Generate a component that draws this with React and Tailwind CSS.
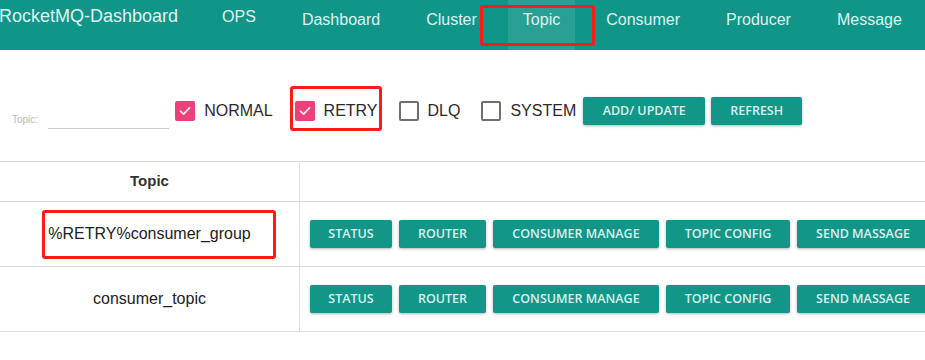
import React from 'react';

const NAV = ['OPS', 'Dashboard', 'Cluster', 'Topic', 'Consumer', 'Producer', 'Message'];

const ROW_BUTTONS = [
    { label: 'STATUS', w: 'w-[82px]' },
    { label: 'ROUTER', w: 'w-[87px]' },
    { label: 'CONSUMER MANAGE', w: 'w-[166px]' },
    { label: 'TOPIC CONFIG', w: 'w-[124px]' },
    { label: 'SEND MASSAGE', w: 'w-[132px]' },
];

const btnClass =
    "shrink-0 h-[28px] rounded-[2px] bg-[#129688] text-[#d7f1ee] text-[12.5px] font-semibold shadow-[0_1px_3px_rgba(0,0,0,0.3)] [font-family:'Open_Sans',sans-serif] flex items-center justify-center";

const Checkbox = ({ checked, label }) => (
    <div className="flex items-center h-[20px] mt-[4px]">
        {checked ? (
            <span className="w-[20px] h-[20px] rounded-[2px] bg-[#ec407a] flex items-center justify-center">
                <svg width="14" height="14" viewBox="0 0 14 14" fill="none">
                    <path d="M2.5 7.2 L5.6 10.2 L11.5 3.8" stroke="#fce4ec" strokeWidth="1.8" strokeLinecap="round" strokeLinejoin="round" />
                </svg>
            </span>
        ) : (
            <span className="w-[20px] h-[20px] rounded-[2px] border-2 border-[#707070]" />
        )}
        <span className="ml-[9px] text-[16px] leading-[20px] text-[#2a2a2a]">{label}</span>
    </div>
);

const TopicRow = ({ name, highlight }) => (
    <div className="flex h-[65px] border-b border-[#dddddd]">
        <div className="relative w-[300px] shrink-0 border-r border-[#dddddd] flex items-center justify-center text-[16px] text-[#222]">
            {name}
            {highlight && (
                <div className="absolute left-[42px] top-[8px] w-[234px] h-[49px] border-[3px] border-[#ff1a1a] rounded-[3px]" />
            )}
        </div>
        <div className="flex items-center gap-[7px] pl-[10px]">
            {ROW_BUTTONS.map((b) => (
                <button key={b.label} className={`${btnClass} ${b.w}`}>
                    {b.label}
                </button>
            ))}
        </div>
    </div>
);

export default function App() {
    return (
        <div className="w-[925px] h-[360px] overflow-hidden bg-white [font-family:'Liberation_Sans',Arial,sans-serif]">
            {/* top bar */}
            <div className="h-[50px] bg-[#109688] flex items-start text-[#dff3f0]">
                <div className="ml-[-1px] pt-[5px] text-[18px] leading-[22px]">RocketMQ-Dashboard</div>
                <div className="flex ml-[29px] gap-[16px]">
                    {NAV.map((item) => (
                        <div
                            key={item}
                            className={`relative h-[50px] px-[15px] text-[16px] leading-[20px] ${item === 'OPS' ? 'pt-[7px]' : 'pt-[10px]'} ${item === 'Topic' ? 'bg-white/10' : ''}`}
                        >
                            {item}
                            {item === 'Topic' && (
                                <div className="absolute left-[-28px] right-[-20px] top-[5px] bottom-[4px] border-[3px] border-[#ff1a1a] rounded-[3px]" />
                            )}
                        </div>
                    ))}
                </div>
            </div>

            {/* filter row */}
            <div className="h-[111px] pt-[47px] pl-[12px]">
                <div className="flex items-start h-[28px]">
                    <div className="flex items-end mt-[14px] h-[18px]">
                        <span className="text-[10px] leading-[10px] pb-[4px] text-[#b8b8b8]">Topic:</span>
                        <div className="ml-[10px] w-[121px] h-[18px] border-b border-[#cccccc]" />
                    </div>
                    <div className="ml-[6px]">
                        <Checkbox checked label="NORMAL" />
                    </div>
                    <div className="relative ml-[22px]">
                        <Checkbox checked label="RETRY" />
                        <div className="absolute left-[-5px] top-[-11px] w-[92px] h-[45px] border-[3px] border-[#ff1a1a] rounded-[3px]" />
                    </div>
                    <div className="ml-[21px]">
                        <Checkbox label="DLQ" />
                    </div>
                    <div className="ml-[21px]">
                        <Checkbox label="SYSTEM" />
                    </div>
                    <button className={`${btnClass} ml-[7px] w-[122px]`}>ADD/ UPDATE</button>
                    <button className={`${btnClass} ml-[6px] w-[91px]`}>REFRESH</button>
                </div>
            </div>

            {/* table */}
            <div className="border-t border-[#dddddd]">
                <div className="flex h-[40px] border-b border-[#dddddd]">
                    <div className="w-[300px] shrink-0 border-r border-[#dddddd] flex items-center justify-center text-[15px] font-bold text-[#333]">
                        Topic
                    </div>
                    <div className="flex-1" />
                </div>
                <TopicRow name="%RETRY%consumer_group" highlight />
                <TopicRow name="consumer_topic" />
            </div>
        </div>
    );
}
